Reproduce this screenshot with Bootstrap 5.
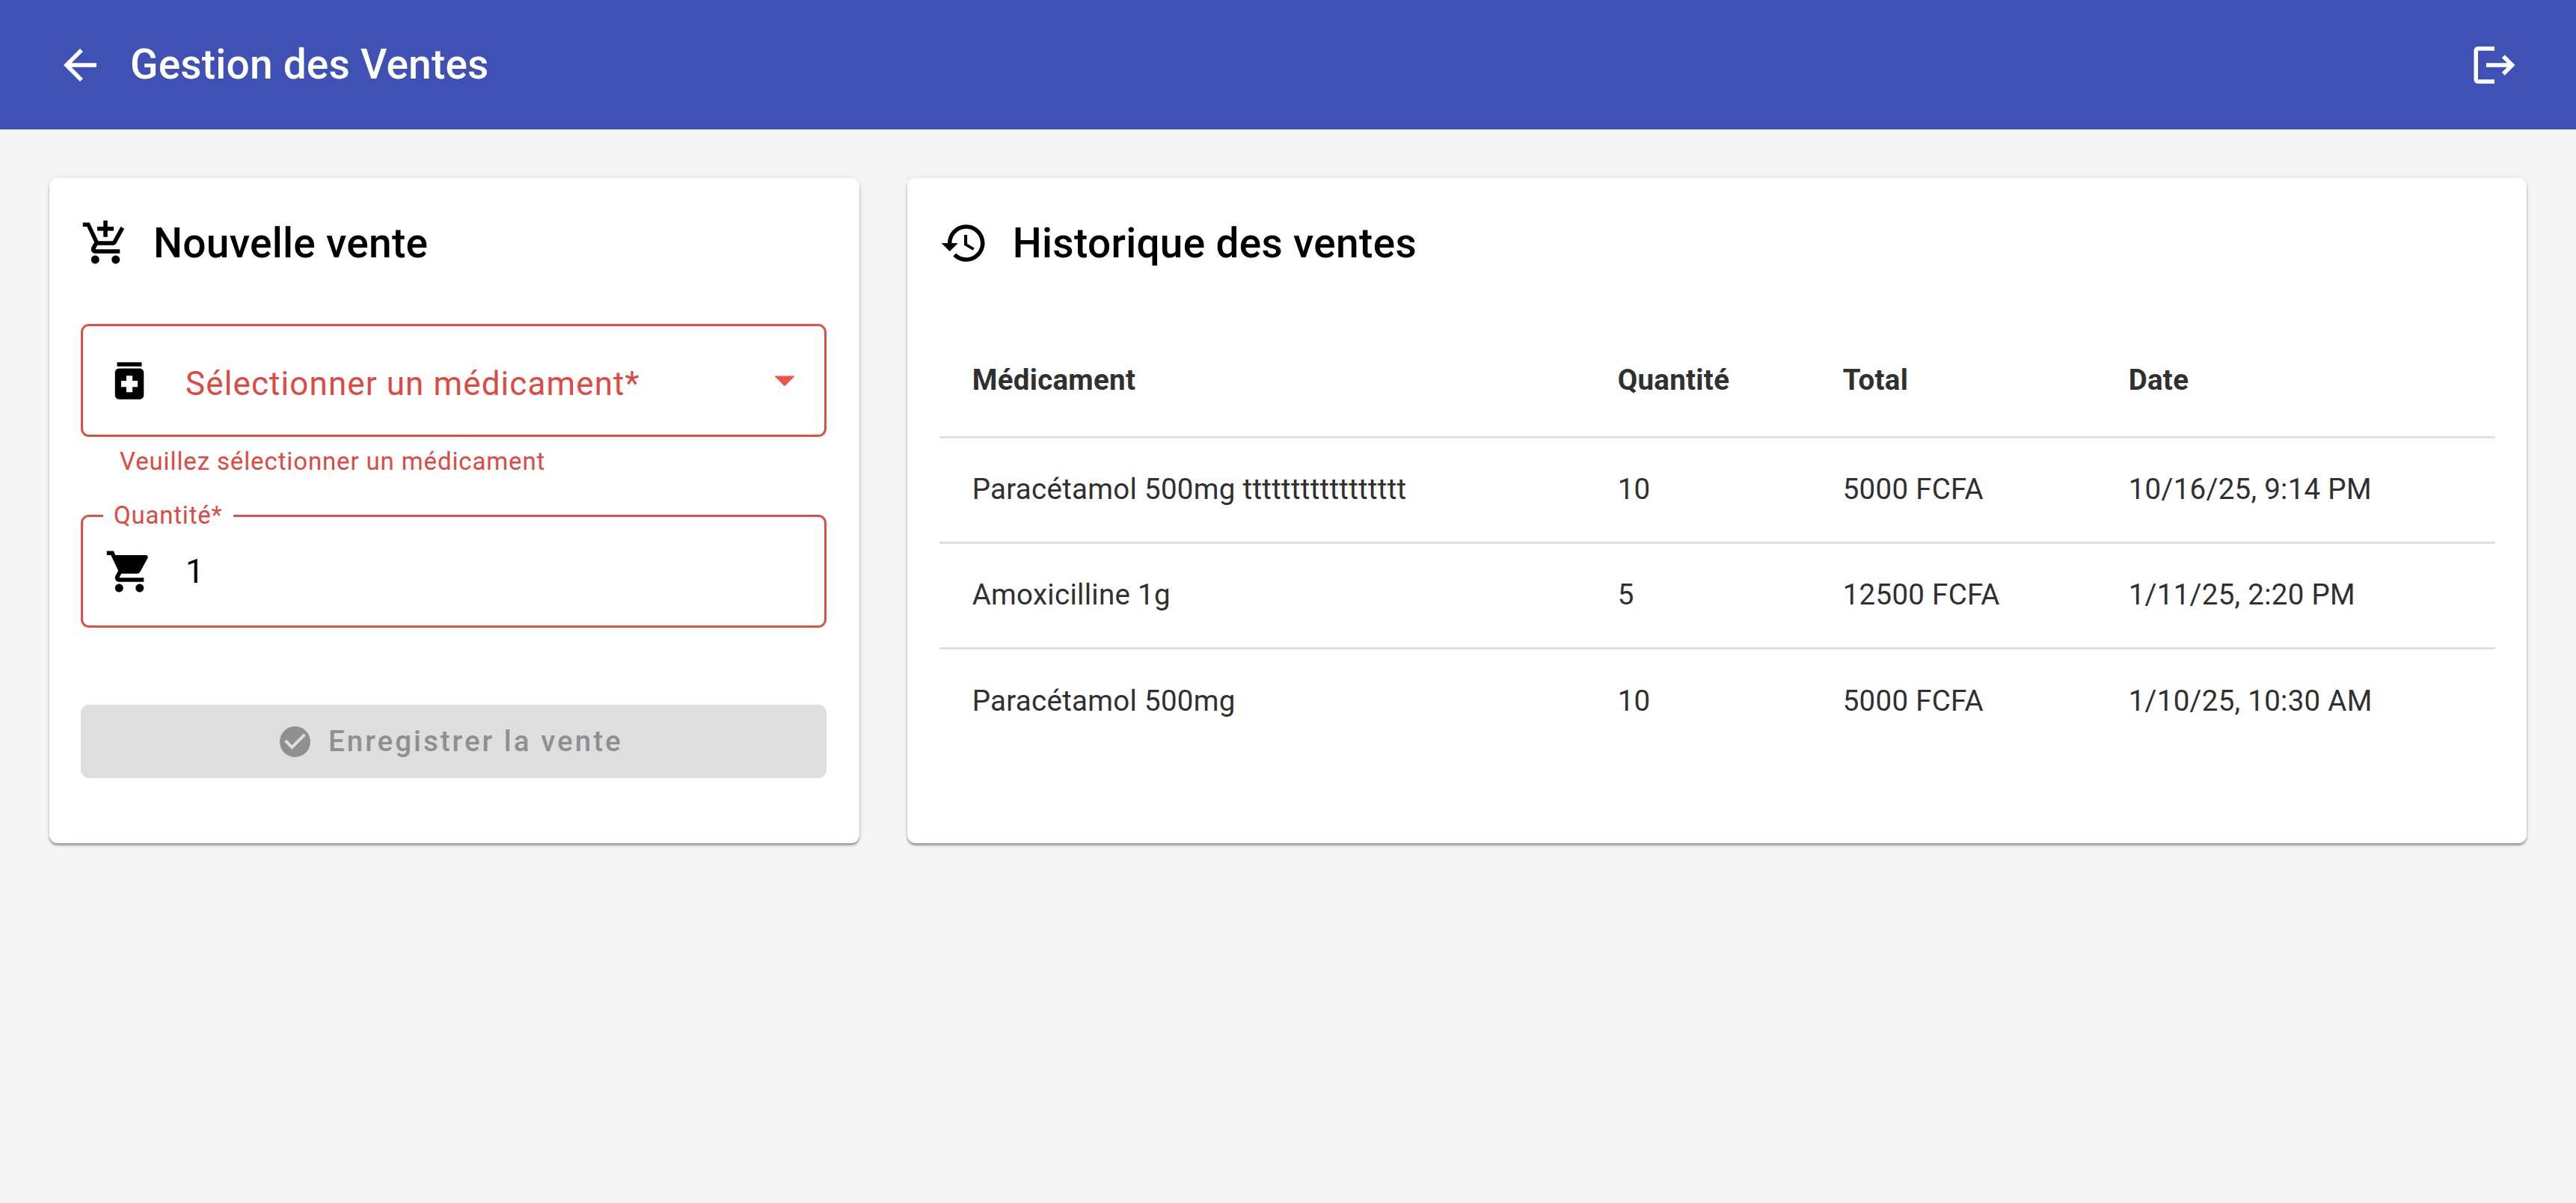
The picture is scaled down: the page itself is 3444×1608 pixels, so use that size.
<!DOCTYPE html>
<html lang="fr">
<head>
  <meta charset="utf-8">
  <title>Gestion des Ventes</title>
  <meta name="viewport" content="width=device-width, initial-scale=1">
  <link href="https://cdn.jsdelivr.net/npm/bootstrap@5.3.3/dist/css/bootstrap.min.css" rel="stylesheet">
  <style>
    body { background: #f5f5f5; font-family: Roboto, "Liberation Sans", sans-serif; color: #000; }
    .top-bar { background: #3f51b5; height: 173px; padding: 0 76px 0 74px; }
    .top-bar .navbar-brand { color: #fff; font-size: 55px; font-weight: 500; line-height: 1; margin: 0 0 0 34px; padding: 0; letter-spacing: .2px; }
    .mi { width: 66px; height: 66px; fill: currentColor; flex: none; display: block; }
    .sales-grid { display: grid; grid-template-columns: 1fr 2fr; gap: 64px; padding: 65px 66px; }
    .panel { border: 0; border-radius: 11px; box-shadow: 0 3px 3px rgba(0,0,0,.35), 0 0 8px rgba(0,0,0,.08); height: 889px; padding: 44px 44px 0 42px; }
    .panel-title { height: 86px; gap: 31px; margin-bottom: 65px; }
    .panel-title h2 { font-size: 55px; font-weight: 500; margin: 0; line-height: 1; letter-spacing: .3px; }
    .panel-wide { padding-right: 42px; padding-left: 43px; }
    .panel-wide .panel-title { gap: 32px; }
    .field { position: relative; height: 151px; border: 3px solid #dd4f47; border-radius: 11px; padding-left: 29px; }
    .field-text { font-size: 44px; margin-left: 42px; line-height: 1; }
    .field-select { color: #de4a41; letter-spacing: 1.1px; position: relative; top: 4px; }
    .field-arrow { position: absolute; right: 20px; top: 39px; color: #ef5350; }
    .field-error { color: #de4a41; font-size: 33px; line-height: 1; padding: 16px 0 0 52px; height: 104px; letter-spacing: .87px; }
    .field-label { position: absolute; left: 27px; top: -19px; background: #fff; color: #de4a41; font-size: 33px; line-height: 1; padding: 0 14px; letter-spacing: .8px; }
    .save-btn.btn { width: 100%; height: 98px; margin-top: 103px; padding: 0 10px 0 0; background: #dedede; color: #8f8f8f; border: 0; border-radius: 11px; font-size: 38.5px; font-weight: 500; letter-spacing: 3.05px; gap: 20px; opacity: 1; }
    .save-btn svg { width: 49px; height: 49px; fill: currentColor; }
    .sales-table { margin: 0; font-size: 38.5px; --bs-table-color: #303030; --bs-table-border-color: #dedede; letter-spacing: .28px; }
    .sales-table th, .sales-table td { padding: 0 44px; vertical-align: middle; border-bottom-width: 3px; line-height: 1; }
    .sales-table th { height: 151px; font-weight: 700; }
    .sales-table td { height: 141px; }
    .sales-table tr:last-child td { border-bottom: 0; }
    .col-name { width: 863px; }
    .col-qty { width: 301px; }
    .col-total { width: 382px; }
  </style>
</head>
<body>
  <nav class="navbar top-bar justify-content-between flex-nowrap">
    <div class="d-flex align-items-center text-white">
      <svg class="mi" viewBox="0 0 24 24"><path d="M20 11H7.83l5.59-5.59L12 4l-8 8 8 8 1.41-1.41L7.83 13H20v-2z"/></svg>
      <span class="navbar-brand">Gestion des Ventes</span>
    </div>
    <svg class="mi text-white" viewBox="0 0 24 24"><path d="M17 7l-1.41 1.41L18.17 11H8v2h10.17l-2.58 2.58L17 17l5-5zM4 5h8V3H4c-1.1 0-2 .9-2 2v14c0 1.1.9 2 2 2h8v-2H4V5z"/></svg>
  </nav>

  <main class="sales-grid">
    <section class="card panel">
      <div class="panel-title d-flex align-items-center">
        <svg class="mi" viewBox="0 0 24 24"><path d="M11 9h2V6h3V4h-3V1h-2v3H8v2h3v3zm-4 9c-1.1 0-1.99.9-1.99 2S5.9 22 7 22s2-.9 2-2-.9-2-2-2zm10 0c-1.1 0-1.99.9-1.99 2s.89 2 1.99 2 2-.9 2-2-.9-2-2-2zm-9.83-3.25l.03-.12.9-1.63h7.45c.75 0 1.41-.41 1.75-1.03l3.86-7.01L19.42 4h-.01l-1.1 2-2.76 5H8.53l-.13-.27L6.16 6l-.95-2-.94-2H1v2h2l3.6 7.59-1.35 2.45c-.16.28-.25.61-.25.96 0 1.1.9 2 2 2h12v-2H7.42c-.13 0-.25-.11-.25-.25z"/></svg>
        <h2>Nouvelle vente</h2>
      </div>

      <div class="field d-flex align-items-center">
        <svg class="mi" viewBox="0 0 24 24"><path d="M6 3h12v2H6V3zM17 6H7C5.9 6 5 6.9 5 8v11c0 1.1.9 2 2 2h10c1.1 0 2-.9 2-2V8c0-1.1-.9-2-2-2zM16 15h-2.5v2.5h-3V15H8v-3h2.5V9.5h3V12H16V15z"/></svg>
        <span class="field-text field-select">Sélectionner un médicament*</span>
        <svg class="mi field-arrow" viewBox="0 0 24 24"><path d="M7 10l5 5 5-5z"/></svg>
      </div>
      <div class="field-error">Veuillez sélectionner un médicament</div>

      <div class="field d-flex align-items-center">
        <span class="field-label">Quantité*</span>
        <svg class="mi" viewBox="0 0 24 24"><path d="M7 18c-1.1 0-1.99.9-1.99 2S5.9 22 7 22s2-.9 2-2-.9-2-2-2zM1 2v2h2l3.6 7.59-1.35 2.45c-.16.28-.25.61-.25.96 0 1.1.9 2 2 2h12v-2H7.42c-.14 0-.25-.11-.25-.25l.03-.12.9-1.63h7.45c.75 0 1.41-.41 1.75-1.03l3.58-6.49A1.003 1.003 0 0 0 20 4H5.21l-.94-2H1zm16 16c-1.1 0-1.99.9-1.99 2s.89 2 1.99 2 2-.9 2-2-.9-2-2-2z"/></svg>
        <span class="field-text">1</span>
      </div>

      <button type="button" class="btn save-btn d-flex align-items-center justify-content-center" disabled>
        <svg viewBox="0 0 24 24"><path d="M12 2C6.48 2 2 6.48 2 12s4.48 10 10 10 10-4.48 10-10S17.52 2 12 2zm-2 15l-5-5 1.41-1.41L10 14.17l7.59-7.59L19 8l-9 9z"/></svg>
        Enregistrer la vente
      </button>
    </section>

    <section class="card panel panel-wide">
      <div class="panel-title d-flex align-items-center">
        <svg class="mi" viewBox="0 0 24 24"><path d="M13 3c-4.97 0-9 4.03-9 9H1l3.89 3.89.07.14L9 12H6c0-3.87 3.13-7 7-7s7 3.13 7 7-3.13 7-7 7c-1.93 0-3.68-.79-4.94-2.06l-1.42 1.42C8.27 19.99 10.51 21 13 21c4.97 0 9-4.03 9-9s-4.03-9-9-9zm-1 5v5l4.28 2.54.72-1.21-3.5-2.08V8H12z"/></svg>
        <h2>Historique des ventes</h2>
      </div>

      <table class="table sales-table">
        <thead>
          <tr>
            <th class="col-name">Médicament</th>
            <th class="col-qty">Quantité</th>
            <th class="col-total">Total</th>
            <th>Date</th>
          </tr>
        </thead>
        <tbody>
          <tr><td>Paracétamol 500mg ttttttttttttttttt</td><td>10</td><td>5000 FCFA</td><td>10/16/25, 9:14 PM</td></tr>
          <tr><td>Amoxicilline 1g</td><td>5</td><td>12500 FCFA</td><td>1/11/25, 2:20 PM</td></tr>
          <tr><td>Paracétamol 500mg</td><td>10</td><td>5000 FCFA</td><td>1/10/25, 10:30 AM</td></tr>
        </tbody>
      </table>
    </section>
  </main>

  <script src="https://cdn.jsdelivr.net/npm/bootstrap@5.3.3/dist/js/bootstrap.bundle.min.js"></script>
</body>
</html>
